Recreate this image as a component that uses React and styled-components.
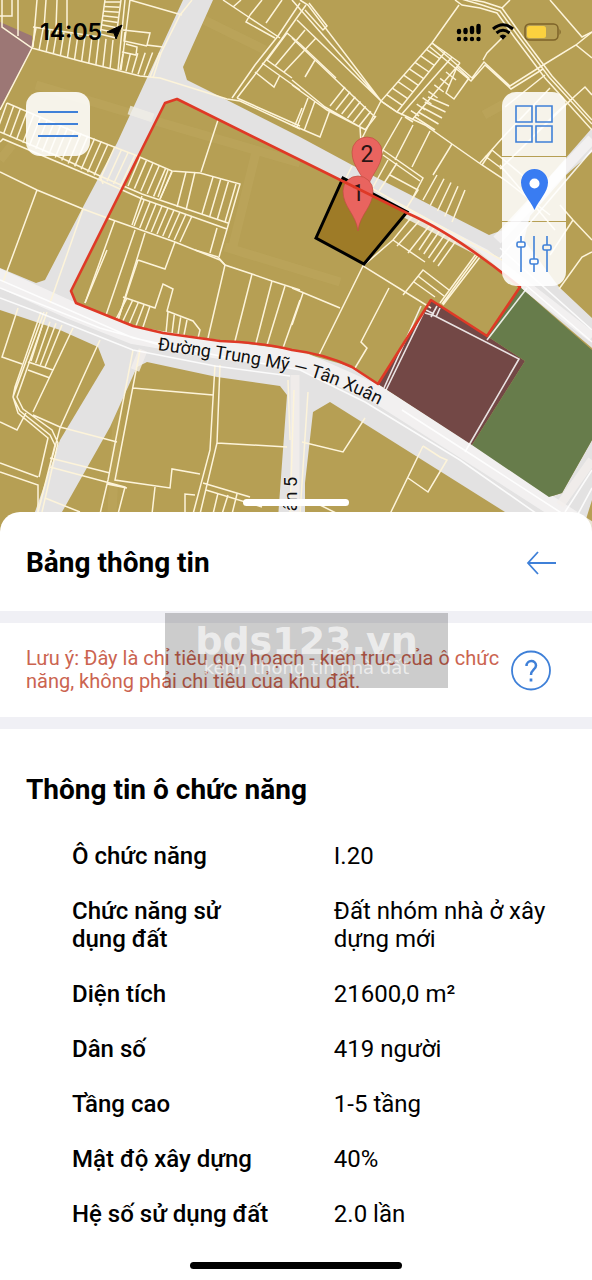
import { useState } from "react"
import styled, { createGlobalStyle } from "styled-components"

const GlobalStyle = createGlobalStyle`
	* {
		box-sizing: border-box;
	}
	body {
		margin: 0;
		background: #fff;
		color: #000;
		font-family: Roboto, "Noto Sans", sans-serif;
	}
`
const Page = styled.div`
	display: flex;
	flex-direction: column;
	min-height: 100vh;
`
const MapArea = styled.section`
	position: relative;
	display: flex;
	flex-direction: column;
	min-height: 532px;
	overflow: hidden;
	background: #b69f54;
`
const MapCanvas = styled.svg`
	position: absolute;
	inset: 0;
	width: 100%;
	height: 100%;
`
const StatusBar = styled.header`
	position: relative;
	display: flex;
	align-items: center;
	justify-content: space-between;
	height: 64px;
	padding: 0 30px 0 40px;
`
const Clock = styled.div`
	display: flex;
	align-items: center;
	gap: 4px;
	font: 600 23px/28px Inter, sans-serif;
`
const StatusIcons = styled.div`
	display: flex;
	align-items: center;
	gap: 10px;
`
const MapControls = styled.div`
	position: relative;
	display: flex;
	align-items: flex-start;
	justify-content: space-between;
	padding: 28px 26px 0;
`
const ControlStack = styled.div`
	display: flex;
	flex-direction: column;
	gap: 1px;
	border-radius: 14px;
	overflow: hidden;
`
const ControlButton = styled.button`
	display: flex;
	align-items: center;
	justify-content: center;
	width: 64px;
	height: 64px;
	padding: 0;
	border: 0;
	border-radius: ${p => (p.$single ? "14px" : "0")};
	background: rgba(255, 255, 255, 0.88);
	cursor: pointer;
`
const Handle = styled.div`
	position: relative;
	width: 106px;
	height: 7px;
	margin: auto auto 26px;
	border-radius: 4px;
	background: #fff;
`
const Sheet = styled.main`
	position: relative;
	display: flex;
	flex: 1;
	flex-direction: column;
	margin-top: -20px;
	border-radius: 20px 20px 0 0;
	background: #fff;
`
const SheetHeader = styled.div`
	display: flex;
	align-items: center;
	justify-content: space-between;
	height: 99px;
	padding: 2px 35px 0 26px;
`
const SheetTitle = styled.h1`
	margin: 0;
	font-size: 28px;
	line-height: 32px;
	font-weight: 700;
`
const PlainButton = styled.button`
	display: flex;
	padding: 0;
	border: 0;
	background: none;
	cursor: pointer;
`
const NoteRow = styled.div`
	position: relative;
	display: flex;
	align-items: center;
	justify-content: space-between;
	min-height: 118px;
	padding: 0 41px 0 26px;
	border: solid #f0f0f5;
	border-width: 12px 0;
`
const Note = styled.p`
	flex: 1;
	margin: 0;
	color: #cb6450;
	font-size: 20px;
	line-height: 23px;
`
const Watermark = styled.div`
	position: absolute;
	top: -10px;
	left: 50%;
	display: flex;
	flex-direction: column;
	align-items: center;
	width: 283px;
	height: 75px;
	padding-top: 10px;
	margin-left: -131px;
	background: rgba(0, 0, 0, 0.2);
	color: rgba(255, 255, 255, 0.65);
	font-family: "DejaVu Sans", sans-serif;
	white-space: nowrap;
	pointer-events: none;
`
const WatermarkName = styled.strong`
	font-size: 38px;
	line-height: 36px;
`
const WatermarkLine = styled.span`
	font-size: 18px;
	line-height: 18px;
`
const Details = styled.section`
	padding: 45px 26px 0;
`
const DetailsTitle = styled.h2`
	margin: 0;
	font-size: 28px;
	line-height: 32px;
	font-weight: 700;
`
const DetailList = styled.dl`
	display: flex;
	flex-direction: column;
	gap: 27px;
	margin: 36px 0 0;
	padding-left: 46px;
	font-size: 24px;
	line-height: 28px;
`
const DetailItem = styled.div`
	display: grid;
	grid-template-columns: 53fr 47fr;
`
const Term = styled.dt`
	padding-right: 60px;
	font-weight: 500;
`
const Value = styled.dd`
	margin: 0;
`
const HomeIndicator = styled.div`
	width: 212px;
	height: 7px;
	margin: auto auto 11px;
	border-radius: 4px;
	background: #000;
`

const details = [
	["Ô chức năng", "I.20"],
	["Chức năng sử dụng đất", "Đất nhóm nhà ở xây dựng mới"],
	["Diện tích", "21600,0 m²"],
	["Dân số", "419 người"],
	["Tầng cao", "1-5 tầng"],
	["Mật độ xây dựng", "40%"],
	["Hệ số sử dụng đất", "2.0 lần"]
]

const roads = [
	"M183 0H213L183 67L187 80L227 100L300 137L352 165L489 235L503 230L592 128V152L566 175L530 216L524 240L559 287L592 318V348L520 287L489 260L474 248L407 213L177 99L165 103L71 291L76 303L133 326L163 333L220 340L292 350L352 367L378 384L472 445L549 497L562 493L592 440V500L582 532H535L505 512L330 402L313 412L305 483V532H277L287 395L280 386L217 377L147 362L137 367L110 427L62 512L52 532H28L60 440L105 365L98 347L60 330L0 310V268L36 283L45 280L83 207L117 143L147 78Z"
]

// parcel borders
const parcels = [
	"M2 0V27L32 48L80 61L140 76L160 78L227 99L240 101L300 129M32 48L0 110M12 0V16H0M18 0V36M37 0L33 47M46 0L44 28M57 0L56 28M67 0V29M33 27L100 37",
	"M125 0L118 70M130 0L121 70M105 0L100 36M121 0L116 38M130 0L182 15M192 0L180 15L161 53L153 78M123 30L150 33L147 45L163 47M125 32L124 41L147 46M126 44L137 47L136 55L122 52M130 0V-2",
	"M7 103L70 130L135 155L172 171L200 173L240 184L219 257M0 132L55 155L100 176L142 194L228 223M0 142L3 139L100 180L140 198L227 229M100 176L103 184M142 196L132 225M217 228L210 253",
	"M0 172L37 190L83 209L110 219L175 242L220 260L225 265L252 274L272 281L300 290M37 190L3 282M83 209L50 303M115 220L85 303M135 230L105 318M145 233L118 320M175 242L165 269L138 260M218 120L201 172M186 172L177 207M195 172L186 210",
	"M223 0L250 18L280 38M233 7L241 0M250 15L246 22L275 38M250 15L262 0M266 23L282 0M300 3L278 36L255 65L232 98M306 5L281 40L260 68L237 98M287 33L300 44L336 78M287 33L267 60L292 78M275 66L305 30M284 72L316 38M262 63L300 90M255 72L274 87L280 75M295 125L302 108M237 98L300 126",
	"M292 0L381 101M300 0L308 5L381 101M297 20L381 101M292 38L375 117M305 10L323 30L327 26L309 3M292 80L325 107L360 127L362 160M292 85L327 110L366 130M381 101L356 150M305 77L315 60M292 125L320 137L330 110M308 98L297 127M315 101L304 131",
	"M459 5L432 43L381 101L397 112L425 125L452 144L482 165L505 180L550 215M432 43L472 78L484 62L510 86L540 67L576 45L592 32M430 47L471 81L485 65L511 89L543 69M445 52L397 112M452 57L401 115M460 63L412 120M445 52L460 63M457 67L469 78L454 99L446 93L457 67M483 60L487 53L502 38",
	"M455 0L462 5L480 8L497 13L515 38L545 78L592 130M458 -2L482 5L500 11L519 37L549 77L592 124M462 -2L484 2L502 8L522 36L552 76L592 120M550 0L582 37L592 32M592 58L576 45M502 8L510 0M592 95L585 87L555 114L520 150M575 96L540 130L500 169M545 75L505 107M480 163L505 135L550 88M482 165L492 150L540 190M485 156L505 171",
	"M402 117L383 150L353 215M413 125L395 160M430 131L412 167M452 144L433 175M383 150L423 178L410 203M373 187L388 160M379 191L397 163M390 175L418 190L404 212M383 155L420 181M352 177L380 193L502 260M352 166L345 180",
	"M415 213L393 240L363 266L431 308M393 240L425 262M430 225L408 253M420 220L397 246M363 266L319 355M389 288L361 342L367 348L355 368M292 288L340 308M303 293L292 325M403 295L423 270L449 290M418 276L444 296M414 282L435 297M476 254L440 303M480 257L443 305M478 255L442 304M560 205L573 220L592 240M573 220L550 255M592 252L582 257L559 289M500 165L555 230",
	"M107 250L85 303M138 260L118 320M123 297L155 308L163 284L173 289L167 311L193 321L200 330L198 338M218 257L225 265L208 338M195 250L218 257M252 274L235 341M272 281L256 343M285 286L267 345M300 300L283 348",
	"M18 308L2 357L22 364M44 312L13 397L20 411L50 435L55 445L38 512M47 312L17 397L23 409L52 430L58 443L42 512M41 312L15 387L13 397L18 413L48 438L39 477M0 422L17 430L26 413M73 328L33 412M100 340L60 428L45 485L33 532M28 362L53 370L73 328M28 370L50 378M33 415L60 427L117 442",
	"M50 458L110 473M50 467L125 487L118 514M0 463L38 477M0 472L38 485V514M45 498L80 512M133 350L108 480L100 514M140 350L115 480L170 488L172 469L200 474M133 388L213 395M155 487L152 514M215 365L210 450L193 514M220 365L217 443L200 514M217 443L287 447M203 483L250 497M206 490L262 507M185 514V494L195 495M237 494L232 514M228 495L222 514M218 493L213 514M107 484L127 488",
	"M302 442L343 452L365 418M423 446L390 514M423 446L440 457L447 460L428 492L408 478M320 505L340 515M294 390L290 514M308 392L300 514M288 380L290 440"
]

// rows of narrow plots: [top start, top end, bottom start, bottom end, count]
const plotRows = [
	[36, 28, 113, 40, 32, 48, 110, 69, 12],
	[123, 54, 160, 52, 120, 70, 150, 77, 6],
	[7, 103, 135, 155, -3, 131, 120, 187, 20],
	[140, 158, 172, 171, 128, 186, 160, 199, 6],
	[213, 177, 236, 184, 202, 214, 225, 222, 4],
	[144, 200, 192, 216, 134, 226, 180, 242, 9],
	[345, 87, 376, 116, 330, 106, 365, 130, 7],
	[432, 43, 381, 101, 445, 52, 397, 112, 10],
	[446, 72, 405, 117, 456, 80, 413, 122, 8],
	[428, 97, 415, 117, 449, 106, 435, 130, 5],
	[437, 175, 465, 190, 423, 200, 452, 222, 5],
	[435, 226, 458, 238, 419, 250, 438, 266, 5],
	[127, 298, 150, 306, 115, 321, 142, 330, 5],
	[168, 312, 187, 320, 166, 333, 184, 335, 4],
	[44, 320, 62, 325, 31, 361, 45, 367, 4],
	[105, 2, 100, 34, 120, 2, 116, 38, 8],
	[172, 172, 168, 170, 160, 199, 158, 197, 2]
]

const plotPath = ([ax, ay, bx, by, cx, cy, dx, dy, count]) => {
	let d = ""
	for (let i = 0; i < count; i++) {
		const t = i / (count - 1)
		d += `M${ax + (bx - ax) * t} ${ay + (by - ay) * t}L${cx + (dx - cx) * t} ${cy + (dy - cy) * t}`
	}
	return d
}

const Pin = ({ x, y, label }) => (
	<g transform={`translate(${x} ${y})`}>
		<path
			d="M0 0C-2 -17 -15 -24 -15 -40A15 15 0 0 1 15 -40C15 -24 2 -17 0 0Z"
			fill="#e9645f"
			stroke="#c04f42"
			strokeOpacity=".7"
		/>
		<text y="-30" textAnchor="middle" fontSize="23" fill="#2b1515">
			{label}
		</text>
	</g>
)

const PlanningMap = () => (
	<MapCanvas viewBox="0 0 592 532" preserveAspectRatio="xMidYMin slice" role="img" aria-label="Bản đồ quy hoạch">
		<path d="M0 22L32 36V48L0 108Z" fill="#9c7775" />
		<g fill="none" stroke="#bda65d" strokeOpacity=".6" strokeWidth="9">
			<path d="M36 85L130 113M152 120L300 163M256 152L232 250M200 18L265 50M225 247L340 282M0 160L12 145M484 115L520 95M120 365L112 512" />
		</g>
		{roads.map(d => (
			<path key={d} d={d} fill="#e3e2e2" />
		))}
		<g fill="none" stroke="#f5f4f4" strokeOpacity=".8">
			<path d="M-5 276L70 310L133 335L220 350L300 360L375 393L480 460L592 532" strokeWidth="18" />
			<path d="M385 202L485 254L592 337M497 240L592 139" strokeWidth="10" />
			<path d="M295 375V532M592 460L560 505M143 350L135 370" strokeWidth="9" stroke="#f2efec" />
			<path d="M129 110L153 118" strokeWidth="9" stroke="#efeee6" />
		</g>
		<path d="M431 300L487 336L525 361L472 445L378 384Z" fill="#734846" />
		<path d="M520 287L592 350V440L562 493L549 497L472 445L525 361L487 336Z" fill="#677c4b" />
		<g fill="none" stroke="#fdf4da" strokeWidth="1.5">
			{parcels.map(d => (
				<path key={d} d={d} />
			))}
			{plotRows.map(row => (
				<path key={row.join()} d={plotPath(row)} />
			))}
		</g>
		<g fill="none" stroke="#fff" strokeWidth="1.6" strokeOpacity=".85">
			<path d="M0 280L60 306L133 338L220 356L300 370L365 402L460 460L560 530M0 298L40 313L133 350L215 366L290 376M0 288L100 328L160 345M402 410L472 455L580 525M520 280L592 342M500 248L592 330M500 258L592 150M592 470L565 512M592 488L578 514" />
			<path d="M425 313L435 316L519 359L465 452M487 340L527 288M421 306L384 388M424 312L386 390M437 306L431 317M440 308L436 317M426 310L434 314" />
		</g>
		<path d="M343 178L407 212L364 264L316 238Z" fill="#9e7b27" stroke="#000" strokeWidth="3" />
		<Pin x={367} y={192} label="2" />
		<Pin x={358} y={231} label="1" />
		<path
			d="M165 103L177 99L300 160L407 213Q455 234 520 287L487 336L431 300L378 384L352 367Q325 354 292 350Q265 343 220 341L163 333L133 326L76 303L71 291Z"
			fill="none"
			stroke="#df3926"
			strokeWidth="2.6"
			strokeLinejoin="round"
		/>
		<path id="street" d="M157 350Q262 364 302 374Q345 386 392 412" fill="none" />
		<g fontSize="18" fill="#111" stroke="#f6f5f4" strokeWidth="1" paintOrder="stroke">
			<text>
				<textPath href="#street">Đường Trung Mỹ — Tân Xuân</textPath>
			</text>
			<text transform="translate(297 477) rotate(-90)" textAnchor="end">
				Xuân 5
			</text>
		</g>
	</MapCanvas>
)

const LocationArrow = () => (
	<svg width="17" height="17" viewBox="0 0 17 17" aria-hidden="true">
		<path d="M16 1L10 15L8 9L1 8Z" stroke="#000" strokeLinejoin="round" />
	</svg>
)

const Signal = () => (
	<svg width="26" height="19" viewBox="0 0 26 19" aria-hidden="true">
		<path
			d="M3 8V9M9.500 7V9M16 5V9M22.500 3V9M3 16V16.100M9.500 16V16.100M16 16V16.100M22.500 16V16.100"
			stroke="#000"
			strokeWidth="4.400"
			strokeLinecap="round"
		/>
	</svg>
)

const Wifi = () => (
	<svg width="22" height="18" viewBox="0 0 22 18" fill="none" stroke="#000" strokeWidth="3" aria-hidden="true">
		<path d="M1 6Q11 -2.500 21 6M4.500 10Q11 4.500 17.500 10" />
		<path d="M7.500 13Q11 9.800 14.500 13L11 16.800Z" fill="#000" stroke="none" />
	</svg>
)

const Battery = () => (
	<svg width="38" height="18" viewBox="0 0 38 18" aria-hidden="true">
		<rect x="1" y="1" width="33" height="16" rx="4.500" fill="none" stroke="#7d6329" strokeWidth="1.500" />
		<rect x="3" y="3" width="19" height="12" rx="2.500" fill="#fbd13f" />
		<path d="M35.500 6Q38 9 35.500 12Z" fill="#7d6329" />
	</svg>
)

const MenuIcon = () => (
	<svg width="40" height="28" viewBox="0 0 40 28" stroke="#3f80d8" strokeWidth="2" aria-hidden="true">
		<path d="M0 2H40M0 14H40M0 26H40" />
	</svg>
)

const GridIcon = () => (
	<svg width="38" height="38" viewBox="0 0 38 38" fill="none" stroke="#3f80d8" strokeWidth="1.600" aria-hidden="true">
		<path d="M1 1H17V17H1ZM21 1H37V17H21ZM1 21H17V37H1ZM21 21H37V37H21Z" />
	</svg>
)

const MarkerIcon = () => (
	<svg width="27" height="41" viewBox="0 0 27 41" aria-hidden="true">
		<path
			d="M13.500 0A13.500 13.500 0 0 0 0 13.500C0 23 9 31 13.500 41C18 31 27 23 27 13.500A13.500 13.500 0 0 0 13.500 0Z"
			fill="#397cf2"
		/>
		<circle cx="13.500" cy="14.500" r="5" fill="#fff" />
	</svg>
)

const SlidersIcon = () => (
	<svg width="38" height="38" viewBox="0 0 38 38" fill="none" stroke="#3f80d8" strokeWidth="1.600" aria-hidden="true">
		<path d="M6 1V7M6 12V37M19 1V24M19 29V37M32 1V10M32 15V37" />
		<rect x="2" y="7" width="8" height="5" rx="1.500" />
		<rect x="15" y="24" width="8" height="5" rx="1.500" />
		<rect x="28" y="10" width="8" height="5" rx="1.500" />
	</svg>
)

const BackIcon = () => (
	<svg width="31" height="24" viewBox="0 0 31 24" fill="none" stroke="#3f80d8" strokeWidth="1.800" aria-hidden="true">
		<path d="M30 12H2M12 1L2 12L12 23" />
	</svg>
)

const HelpIcon = () => (
	<svg width="40" height="41" viewBox="0 0 40 41" fill="none" stroke="#3f80d8" aria-hidden="true">
		<circle cx="20" cy="20.500" r="19" strokeWidth="1.800" />
		<path d="M15.500 16C15.500 9.500 25 9.500 25 15.500C25 19.500 20 19.500 20 25" strokeWidth="2.500" />
		<path d="M20 28.500V31.500" strokeWidth="2.700" />
	</svg>
)

export default function App() {
	const [helpOpen, setHelpOpen] = useState(false)

	return (
		<Page>
			<GlobalStyle />
			<MapArea>
				<PlanningMap />
				<StatusBar>
					<Clock>
						14:05
						<LocationArrow />
					</Clock>
					<StatusIcons>
						<Signal />
						<Wifi />
						<Battery />
					</StatusIcons>
				</StatusBar>
				<MapControls>
					<ControlButton $single aria-label="Menu">
						<MenuIcon />
					</ControlButton>
					<ControlStack>
						<ControlButton aria-label="Lớp bản đồ">
							<GridIcon />
						</ControlButton>
						<ControlButton aria-label="Vị trí">
							<MarkerIcon />
						</ControlButton>
						<ControlButton aria-label="Bộ lọc">
							<SlidersIcon />
						</ControlButton>
					</ControlStack>
				</MapControls>
				<Handle />
			</MapArea>
			<Sheet>
				<SheetHeader>
					<SheetTitle>Bảng thông tin</SheetTitle>
					<PlainButton aria-label="Quay lại">
						<BackIcon />
					</PlainButton>
				</SheetHeader>
				<NoteRow>
					<Note>Lưu ý: Đây là chỉ tiêu quy hoạch - kiến trúc của ô chức năng, không phải chỉ tiêu của khu đất.</Note>
					<PlainButton aria-label="Trợ giúp" aria-pressed={helpOpen} onClick={() => setHelpOpen(!helpOpen)}>
						<HelpIcon />
					</PlainButton>
					<Watermark>
						<WatermarkName>bds123.vn</WatermarkName>
						<WatermarkLine>kênh thông tin nhà đất</WatermarkLine>
					</Watermark>
				</NoteRow>
				<Details>
					<DetailsTitle>Thông tin ô chức năng</DetailsTitle>
					<DetailList>
						{details.map(([term, value]) => (
							<DetailItem key={term}>
								<Term>{term}</Term>
								<Value>{value}</Value>
							</DetailItem>
						))}
					</DetailList>
				</Details>
				<HomeIndicator />
			</Sheet>
		</Page>
	)
}
